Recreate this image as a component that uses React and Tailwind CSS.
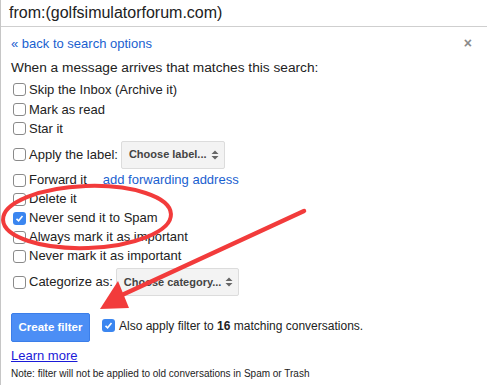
import React from "react";

function Box({ checked }) {
  if (checked) {
    return (
      <span className="flex h-[13px] w-[13px] shrink-0 items-center justify-center rounded-[3px] bg-[#3b86f0]">
        <svg width="9" height="9" viewBox="0 0 9 9">
          <path d="M1.5 4.8 L3.6 6.8 L7.5 2" fill="none" stroke="#fff" strokeWidth="1.6" />
        </svg>
      </span>
    );
  }
  return <span className="h-[13px] w-[13px] shrink-0 rounded-[3px] border border-[#8a8a8a] bg-white" />;
}

function Row({ label, checked, className = "h-[19.5px]", children }) {
  return (
    <div className={`flex items-center ${className}`}>
      <Box checked={checked} />
      <span className="ml-[3px] whitespace-nowrap">{label}</span>
      {children}
    </div>
  );
}

function Select({ text, className }) {
  return (
    <div
      className={`flex h-[28px] items-center justify-between rounded-[2px] border border-[#dcdcdc] bg-[#f3f3f3] pl-[7px] pr-[5px] text-[11px] font-bold text-[#444] ${className}`}
    >
      <span className="whitespace-nowrap">{text}</span>
      <svg width="8" height="12" viewBox="0 0 8 12">
        <path d="M0.5 5 L4 1.5 L7.5 5 Z M0.5 7 L4 10.5 L7.5 7 Z" fill="#666" />
      </svg>
    </div>
  );
}

export default function App() {
  return (
    <div className="relative h-[385px] w-[487px] overflow-hidden bg-white font-['Liberation_Sans',Arial,sans-serif] text-[#222]">
      <div className="h-full border-l border-[#c6c6c6]">
        <div className="h-[27px] border-b border-[#cfcfcf] pl-[8px] text-[16px] leading-[25px]">
          from:(golfsimulatorforum.com)
        </div>

        <div className="relative px-[10px] text-[13px]">
          <div className="flex h-[33px] items-center justify-between">
            <span className="text-[13px] text-[#1a5fd0]">« back to search options</span>
            <span className="mr-[5px] text-[14px] font-bold text-[#8a8a8a]">×</span>
          </div>

          <div className="flex h-[17px] items-center text-[13.7px]">
            When a message arrives that matches this search:
          </div>

          <div className="mt-[3px] pl-[2px]">
            <Row label="Skip the Inbox (Archive it)" />
            <Row label="Mark as read" />
            <Row label="Star it" />
            <Row label="Apply the label:" className="h-[32px]">
              <Select text="Choose label..." className="ml-[3px] w-[104px]" />
            </Row>
            <Row label="Forward it" className="h-[19px]">
              <span className="ml-[16px] text-[#1a5fd0]">add forwarding address</span>
            </Row>
            <Row label="Delete it" className="h-[19px]" />
            <Row label="Never send it to Spam" checked className="h-[19px]" />
            <Row label="Always mark it as important" className="h-[19px]" />
            <Row label="Never mark it as important" className="h-[19px]" />
            <Row label="Categorize as:" className="h-[33px]">
              <Select text="Choose category..." className="ml-[3px] w-[123px]" />
            </Row>
          </div>

          <div className="mt-[14.5px] flex items-center">
            <div className="flex h-[29px] w-[79px] items-center justify-center rounded-[2px] border border-[#3b7ee9] bg-[#4c8ef5] text-[11.5px] font-bold text-white">
              Create filter
            </div>
            <div className="ml-[12px] -mt-[4px] flex items-center">
              <Box checked />
              <span className="ml-[4px] whitespace-nowrap text-[12px]">
                Also apply filter to <b>16</b> matching conversations.
              </span>
            </div>
          </div>

          <div className="mt-[6px] text-[13px] leading-[16px] text-[#1a1ad8] underline">Learn more</div>
          <div className="mt-[3.5px] text-[10px] leading-[11px]">
            Note: filter will not be applied to old conversations in Spam or Trash
          </div>
        </div>
      </div>

      <svg className="pointer-events-none absolute inset-0" width="487" height="385" viewBox="0 0 487 385">
        <ellipse cx="87" cy="217" rx="84" ry="31" fill="none" stroke="#f23b3b" strokeWidth="4" transform="rotate(-2 87 217)" />
        <line x1="304" y1="211" x2="122" y2="295" stroke="#f23b3b" strokeWidth="4.5" strokeLinecap="round" />
        <polygon points="100,309 129,308 118,281" fill="#f23b3b" />
      </svg>
    </div>
  );
}
